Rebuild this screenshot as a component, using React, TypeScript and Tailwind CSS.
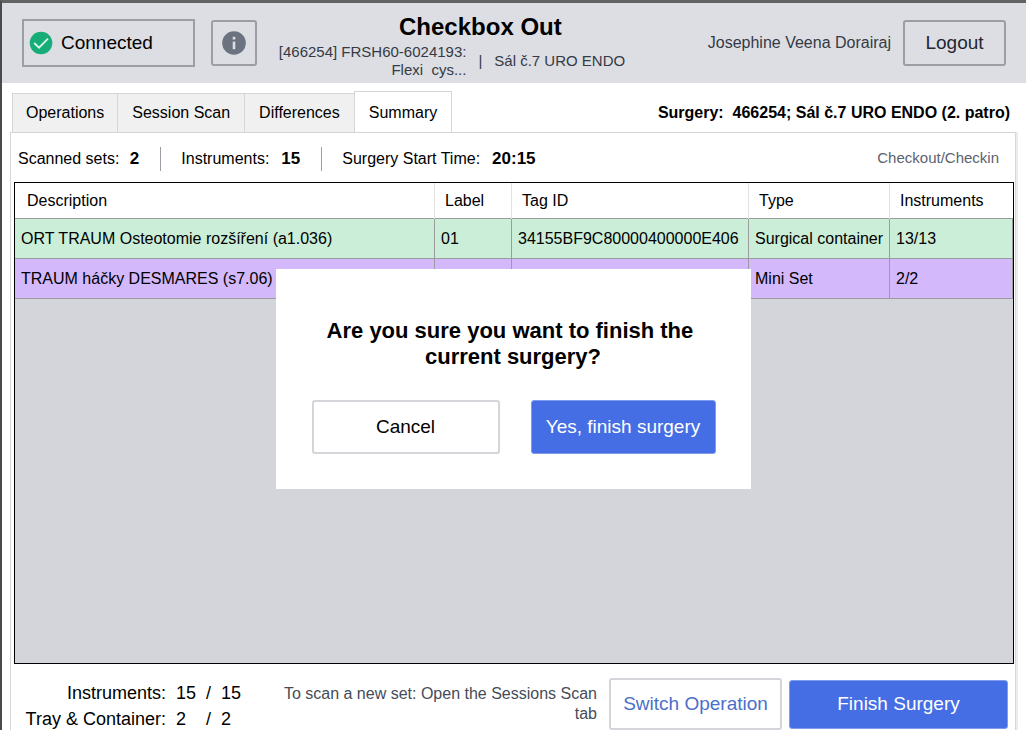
import clsx from "clsx";

interface SetRow {
  description: string;
  label: string;
  tagId: string;
  type: string;
  instruments: string;
  color: string;
}

const tabs = ["Operations", "Session Scan", "Differences", "Summary"];

const columns = ["Description", "Label", "Tag ID", "Type", "Instruments"];

const rows: SetRow[] = [
  {
    description: "ORT TRAUM Osteotomie rozšíření (a1.036)",
    label: "01",
    tagId: "34155BF9C80000400000E406",
    type: "Surgical container",
    instruments: "13/13",
    color: "bg-[#cbeed8]",
  },
  {
    description: "TRAUM háčky DESMARES (s7.06)",
    label: "",
    tagId: "",
    type: "Mini Set",
    instruments: "2/2",
    color: "bg-[#d3b8fb]",
  },
];

function CheckIcon() {
  return (
    <svg viewBox="0 0 24 24" className="size-6 shrink-0" aria-hidden="true">
      <circle cx="12" cy="12" r="11.3" fill="#17ad78" />
      <path
        d="M5.2 12 10 16.6 19 7.6"
        fill="none"
        stroke="#d5f5e6"
        strokeWidth="1.9"
      />
    </svg>
  );
}

function InfoIcon() {
  return (
    <svg viewBox="0 0 24 24" className="size-6" aria-hidden="true">
      <circle cx="12" cy="12" r="11.8" fill="#6b7280" />
      <rect x="10.7" y="5.8" width="2.6" height="2.7" fill="#dddee3" />
      <rect x="10.7" y="10.6" width="2.6" height="7.6" fill="#dddee3" />
    </svg>
  );
}

function Header() {
  return (
    <header className="flex h-20 items-center bg-[#dddee3] px-5">
      <div className="flex h-12 w-[173px] items-center gap-2 border-2 border-[#9b9ea5] pl-[5px] text-[19px]">
        <CheckIcon />
        Connected
      </div>
      <button
        type="button"
        aria-label="Information"
        className="ml-4 flex size-[46px] items-center justify-center rounded-[3px] border-2 border-[#9b9ea5]"
      >
        <InfoIcon />
      </button>
      <div className="flex-1 pt-1 pr-1 text-center">
        <h1 className="text-2xl leading-8 font-bold">Checkbox Out</h1>
        <div className="grid grid-cols-[1fr_auto_1fr] items-center gap-3 text-[15px] leading-[18px] text-[#343a46]">
          <div className="text-right">
            [466254] FRSH60-6024193:
            <br />
            Flexi&nbsp; cys...
          </div>
          <span>|</span>
          <span className="text-left">Sál č.7 URO ENDO</span>
        </div>
      </div>
      <span className="mr-3 text-base text-[#343a46]">
        Josephine Veena Dorairaj
      </span>
      <button
        type="button"
        className="h-[46px] w-[103px] rounded-[3px] border-2 border-[#9b9ea5] text-[19px] text-[#1f2733]"
      >
        Logout
      </button>
    </header>
  );
}

function Tabs() {
  return (
    <div className="flex items-end justify-between pl-0.5 pr-2">
      <div role="tablist" className="-mb-px flex items-end">
        {tabs.map((tab) => {
          const active = tab === "Summary";
          return (
            <button
              key={tab}
              type="button"
              role="tab"
              aria-selected={active}
              className={clsx(
                "border-t border-l border-[#d6d6d6]",
                active
                  ? "h-[42px] border-r bg-white px-[14px]"
                  : "h-10 border-b bg-[#f0f0f0] px-[13px] not-first:px-[14px]",
              )}
            >
              {tab}
            </button>
          );
        })}
      </div>
      <p className="pb-[7px] font-bold">
        Surgery:&nbsp; 466254; Sál č.7 URO ENDO (2. patro)
      </p>
    </div>
  );
}

function Stats() {
  return (
    <div className="flex h-[49px] items-center pt-0.5 pl-1 pr-[15px]">
      <p>
        Scanned sets: <b className="ml-1.5 text-[17px]">2</b>
      </p>
      <p className="ml-[21px] flex h-6 items-center border-l border-[#9b9ea5] pl-5">
        Instruments: <b className="ml-3 text-[17px]">15</b>
      </p>
      <p className="ml-[21px] flex h-6 items-center border-l border-[#9b9ea5] pl-5">
        Surgery Start Time: <b className="ml-3 text-[17px]">20:15</b>
      </p>
      <span className="ml-auto text-[15px] text-[#5b626e]">
        Checkout/Checkin
      </span>
    </div>
  );
}

function SetsTable() {
  return (
    <div className="flex-1 border border-black bg-[#d4d5da]">
      <table className="w-full table-fixed">
        <colgroup>
          <col />
          <col className="w-[77px]" />
          <col className="w-[237px]" />
          <col className="w-[141px]" />
          <col className="w-[123px]" />
        </colgroup>
        <thead>
          <tr className="h-[35px] border-b border-[#9c9c9c] bg-white">
            {columns.map((column) => (
              <th
                key={column}
                className="border-r border-[#e2e2e2] pt-0.5 pl-2.5 text-left font-normal first:pl-3 last:border-r-0"
              >
                {column}
              </th>
            ))}
          </tr>
        </thead>
        <tbody>
          {rows.map((row) => (
            <tr
              key={row.description}
              className={clsx(
                "h-10 border-b border-[#9c9c9c] whitespace-nowrap *:border-r *:border-[#9c9c9c] *:pt-0.5 *:pl-1.5",
                row.color,
              )}
            >
              <td>{row.description}</td>
              <td>{row.label}</td>
              <td>{row.tagId}</td>
              <td>{row.type}</td>
              <td>{row.instruments}</td>
            </tr>
          ))}
        </tbody>
      </table>
    </div>
  );
}

function Footer() {
  return (
    <footer className="flex items-start pt-3.5 pr-1.5">
      <dl className="grid shrink-0 grid-cols-[152px_30px_15px_auto] pt-0.5 text-lg leading-[26px] -mb-0.5">
        <dt className="text-right">Instruments:</dt>
        <dd className="pl-2.5">15</dd>
        <dd className="pl-2.5">/</dd>
        <dd className="pl-2.5">15</dd>
        <dt className="text-right">Tray &amp; Container:</dt>
        <dd className="pl-2.5">2</dd>
        <dd className="pl-2.5">/</dd>
        <dd className="pl-2.5">2</dd>
      </dl>
      <p className="ml-auto w-[330px] pt-1.5 text-right leading-5 text-[#454c58]">
        To scan a new set: Open the Sessions Scan tab
      </p>
      <button
        type="button"
        className="ml-3 h-[52px] w-[173px] shrink-0 rounded-[3px] border-2 border-[#d4d5da] bg-white text-[19px] text-[#4a6fca]"
      >
        Switch Operation
      </button>
      <button
        type="button"
        className="mt-0.5 ml-[7px] h-[49px] w-[219px] shrink-0 rounded-[3px] border border-[#7f9bec] bg-[#466ee4] text-[19px] text-white"
      >
        Finish Surgery
      </button>
    </footer>
  );
}

function ConfirmDialog() {
  return (
    <div className="fixed inset-0 flex items-center justify-center pt-7">
      <div
        role="dialog"
        aria-modal="true"
        aria-labelledby="confirm-title"
        className="w-[475px] bg-white px-9 pt-[49px] pb-[35px]"
      >
        <h2
          id="confirm-title"
          className="text-center text-[22px] leading-[26px] font-bold"
        >
          Are you sure you want to finish the&nbsp;
          <br />
          current surgery?
        </h2>
        <div className="-mr-px mt-[30px] flex justify-between text-[19px]">
          <button
            type="button"
            className="h-[54px] w-[188px] rounded-[3px] border-2 border-[#d4d5da] bg-white"
          >
            Cancel
          </button>
          <button
            type="button"
            className="h-[54px] w-[185px] rounded-[3px] border border-[#7f9bec] bg-[#466ee4] text-white"
          >
            Yes, finish surgery
          </button>
        </div>
      </div>
    </div>
  );
}

export default function App() {
  return (
    <div className="flex min-h-screen flex-col border-t-3 border-l-2 border-t-[#626262] border-l-[#4a4a4a] bg-white font-['Liberation_Sans',Arial,sans-serif] text-base text-black">
      <Header />
      <main className="flex flex-1 flex-col px-2 pt-2">
        <Tabs />
        <div className="flex flex-1 flex-col border-r-2 border-[#ececec]">
          <section className="flex flex-1 flex-col border-x border-t border-[#d6d6d6] pr-px pl-[3px]">
            <Stats />
            <SetsTable />
            <Footer />
          </section>
        </div>
      </main>
      <ConfirmDialog />
    </div>
  );
}
